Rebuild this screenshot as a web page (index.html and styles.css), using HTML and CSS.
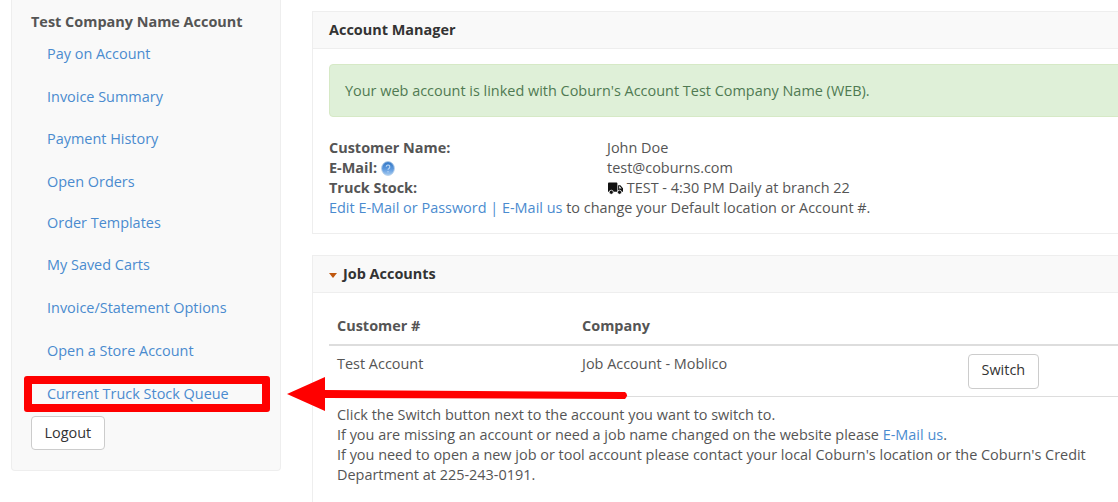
FILE: index.html
```html
<!DOCTYPE html>
<html lang="en">
<head>
<meta charset="utf-8">
<title>Account Manager</title>
<link rel="stylesheet" href="styles.css">
</head>
<body>
<div class="layout">
  <aside class="sidebar">
    <h4 class="side-title">Test Company Name Account</h4>
    <ul class="side-nav">
      <li><a href="#">Pay on Account</a></li>
      <li class="mid"><a href="#">Invoice Summary</a></li>
      <li><a href="#">Payment History</a></li>
      <li class="short"><a href="#">Open Orders</a></li>
      <li class="mid"><a href="#">Order Templates</a></li>
      <li><a href="#">My Saved Carts</a></li>
      <li><a href="#">Invoice/Statement Options</a></li>
      <li><a href="#">Open a Store Account</a></li>
      <li class="last"><a href="#">Current Truck Stock Queue</a></li>
    </ul>
    <button class="btn logout">Logout</button>
  </aside>
  <main class="main">
    <section class="panel first">
      <header class="panel-head">Account Manager</header>
      <div class="panel-body">
        <div class="alert">Your web account is linked with Coburn's Account Test Company Name (WEB).</div>
        <dl class="info">
          <dt>Customer Name:</dt><dd>John Doe</dd>
          <dt>E-Mail: <svg class="help" viewBox="0 0 14 15" width="14" height="15"><defs><linearGradient id="hg" x1="0" y1="0" x2="0" y2="1"><stop offset="0" stop-color="#2f74c4"/><stop offset=".55" stop-color="#5f9ade"/><stop offset="1" stop-color="#a4cbf2"/></linearGradient></defs><ellipse cx="7" cy="7.500" rx="6.400" ry="6.900" fill="url(#hg)" stroke="#b5cfe9" stroke-width=".9"/><path d="M5.200 5.700a1.800 1.800 0 1 1 2.700 1.700c-.6.3-.9.700-.9 1.400" fill="none" stroke="#bcd8f5" stroke-width="1.100"/><circle cx="7" cy="10.800" r=".7" fill="#bcd8f5"/></svg></dt><dd>test@coburns.com</dd>
          <dt>Truck Stock:</dt><dd><svg class="truck" viewBox="0 0 16 13" width="15" height="13"><path d="M0 1.200C0 .5.5 0 1.200 0h7.600C9.500 0 10 .5 10 1.200V10H0z" fill="#111"/><path d="M10.800 3h2.400l2.800 3.200V10h-5.200zM11.900 4.100v2.300h2.600l-2-2.300z" fill="#111" fill-rule="evenodd"/><circle cx="3.500" cy="10.500" r="2.200" fill="#111" stroke="#fff" stroke-width=".8"/><circle cx="12.300" cy="10.500" r="2.200" fill="#111" stroke="#fff" stroke-width=".8"/></svg> TEST - 4:30 PM Daily at branch 22</dd>
        </dl>
        <p class="edit"><a href="#">Edit E-Mail or Password | E-Mail us</a> to change your Default location or Account #.</p>
      </div>
    </section>
    <section class="panel">
      <header class="panel-head"><span class="caret"></span>Job Accounts</header>
      <div class="panel-body jobs">
        <table class="table">
          <thead><tr><th class="c1">Customer #</th><th class="c2">Company</th><th></th></tr></thead>
          <tbody><tr><td>Test Account</td><td>Job Account - Moblico</td><td class="c3"><button class="btn switch">Switch</button></td></tr></tbody>
        </table>
        <p class="note">Click the Switch button next to the account you want to switch to.<br>If you are missing an account or need a job name changed on the website please <a href="#">E-Mail us</a>.<br>If you need to open a new job or tool account please contact your local Coburn's location or the Coburn's Credit Department at 225-243-0191.</p>
      </div>
    </section>
  </main>
</div>
<div class="highlight"></div>
<svg class="arrow" viewBox="0 0 350 40" width="350" height="40"><path d="M38 13 L338 15 Q342 18 338 22 L38 21 Z" fill="#f00"/><polygon points="0,17 38,0 38,34" fill="#f00"/></svg>
</body>
</html>
```
FILE: styles.css
```css
html, body {
  margin: 0;
  height: 502px;
  overflow: hidden;
  background: #fff;
}
body {
  position: relative;
  font: 14.44px/20px "Open Sans", sans-serif;
  color: #555;
}
a {
  color: #4a8bcf;
  text-decoration: none;
}
.layout {
  display: flex;
  align-items: flex-start;
  gap: 31px;
  padding-left: 11px;
  width: 1118px;
  height: 502px;
  box-sizing: border-box;
  overflow: hidden;
}
.sidebar {
  box-sizing: border-box;
  width: 270px;
  height: 471px;
  flex: none;
  padding: 12px 19px 0;
  background: #f9f9f9;
  border: 1px solid #eee;
  border-top: 0;
  border-radius: 0 0 4px 4px;
}
.side-title {
  margin: 0;
  font-size: 14.44px;
  line-height: 20px;
  font-weight: 700;
  color: #555;
}
.side-nav {
  list-style: none;
  margin: 0;
  padding: 0 0 0 16px;
}
.side-nav li {
  height: 43px;
  padding-top: 12px;
  box-sizing: border-box;
}
.side-nav li.mid {
  height: 42px;
}
.side-nav li.short {
  height: 41px;
}
.side-nav li.last {
  height: 44px;
}
.btn {
  box-sizing: border-box;
  font: 14.44px/20px "Open Sans", sans-serif;
  color: #333;
  background: #fff;
  border: 1px solid #ccc;
  border-radius: 4px;
  padding: 6px 12.5px;
  height: 35px;
}
.logout {
  height: 34px;
}
.switch {
  padding-top: 5px;
  padding-bottom: 8px;
}
.main {
  flex: none;
  width: 830px;
  padding-top: 11px;
}
.panel {
  border: 1px solid #eee;
  margin-bottom: 21px;
}
.panel-head {
  height: 36px;
  padding-left: 16px;
  font-weight: 700;
  line-height: 36px;
  color: #333;
  background: #f9f9f9;
  border-bottom: 1px solid #eee;
}
.panel-body {
  padding: 15px 16px 15px;
}
.alert {
  box-sizing: border-box;
  height: 53px;
  padding: 16px 15px;
  color: #4f7a52;
  background: #dff0d8;
  border: 1px solid #d6e9c6;
  border-radius: 4px;
}
.info {
  display: grid;
  grid-template-columns: 278px 1fr;
  margin: 21px 0 0;
}
.info dt {
  font-weight: 700;
}
.info dd {
  margin: 0;
}
.help {
  vertical-align: -3px;
}
.truck {
  margin-left: 1px;
  vertical-align: -2px;
}
.edit {
  margin: 0;
}
.caret {
  display: inline-block;
  width: 0;
  height: 0;
  margin-right: 6px;
  vertical-align: 1px;
  border-left: 4px solid transparent;
  border-right: 4px solid transparent;
  border-top: 5px solid #c0580f;
}
.panel-body.jobs {
  padding-top: 14px;
  padding-bottom: 40px;
}
.table {
  border-collapse: collapse;
  width: 798px;
  table-layout: fixed;
}
.table th {
  height: 38px;
  padding: 9px 8px 0;
  box-sizing: border-box;
  text-align: left;
  vertical-align: top;
  font-weight: 700;
  border-bottom: 2px solid #ddd;
}
.table td {
  height: 51px;
  padding: 8px;
  vertical-align: top;
  box-sizing: border-box;
  border-bottom: 1px solid #ddd;
}
.table .c1 {
  width: 245px;
}
.table .c2 {
  width: 394px;
}
.table td.c3 {
  padding: 8px 0 0;
}
.note {
  margin: 8px 0 0;
  padding-left: 8px;
  width: 775px;
}
.highlight {
  position: absolute;
  left: 24px;
  top: 376px;
  box-sizing: border-box;
  width: 246px;
  height: 36px;
  border: 8px solid #f00;
  border-radius: 3px;
}
.arrow {
  position: absolute;
  left: 287px;
  top: 377px;
}
```
